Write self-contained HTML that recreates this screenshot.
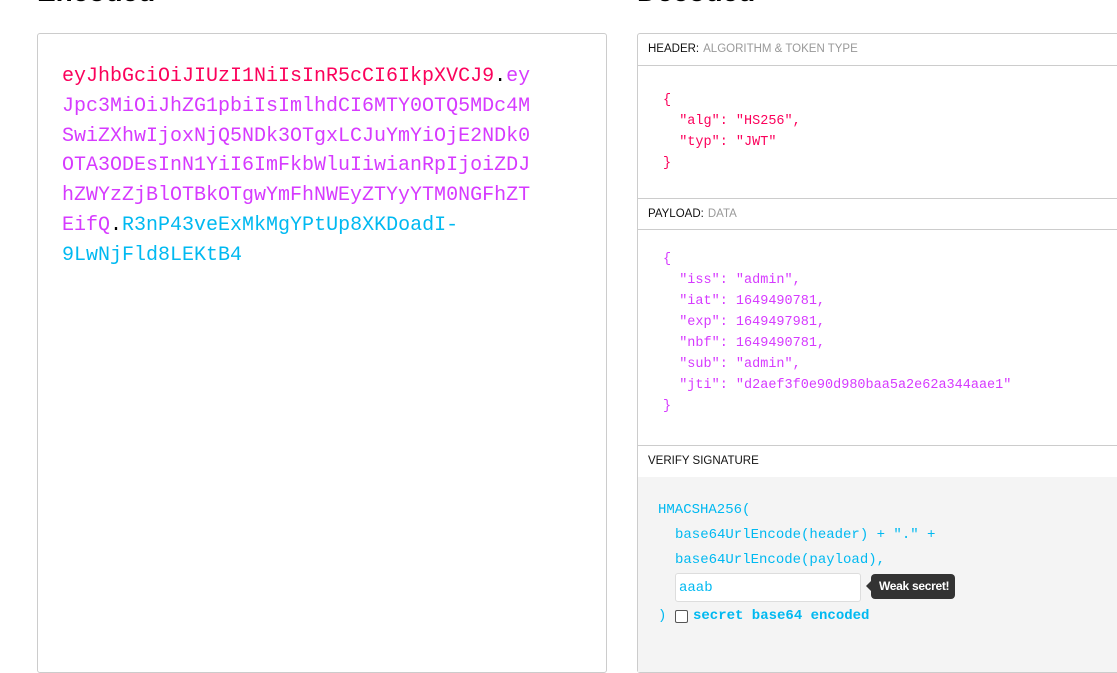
<!DOCTYPE html>
<html><head><meta charset="utf-8"><style>
*{margin:0;padding:0;box-sizing:border-box}
body{width:1117px;height:647px;overflow:hidden;background:#fff;font-family:"Liberation Sans",sans-serif;position:relative}
.mono{font-family:"Liberation Mono",monospace}
.t{position:absolute;font-weight:bold;font-size:28px;color:#000;line-height:28px}
.st{position:absolute;font-size:11px;color:#aaa;line-height:12px}
#enc{position:absolute;left:37px;top:33px;width:570px;height:640px;border:1px solid #ccc;border-radius:3px}
#enc .code{position:absolute;left:24px;top:28px;font-size:20px;line-height:29.8px;white-space:pre}
.r{color:#fb015b}.p{color:#d63aff}.c{color:#00b9f1}.k{color:#000}
#dec{position:absolute;left:637px;top:33px;width:500px;height:640px;border:1px solid #ccc;border-radius:3px}
.lbl{position:absolute;left:0;right:0;height:32px;border-bottom:1px solid #ccc;font-size:11.5px;color:#111;padding:9px 0 0 10px}
.lbl span{color:#999;margin-left:4px}
.js{position:absolute;left:25px;font-size:13.5px;line-height:21px;white-space:pre}
#vb{position:absolute;left:0;right:0;top:443px;bottom:0;background:#f4f4f4}
.v{position:absolute;font-size:14px;color:#00b9f1;white-space:pre;line-height:20px}
</style></head><body>
<div class="t" style="left:37px;top:-22px">Encoded</div>
<div class="st" style="left:157px;top:-9px">PASTE A TOKEN HERE</div>
<div class="t" style="left:637px;top:-22px">Decoded</div>
<div class="st" style="left:760px;top:-9px">EDIT THE PAYLOAD AND SECRET</div>
<div id="enc"><div class="code mono"><span class="r">eyJhbGciOiJIUzI1NiIsInR5cCI6IkpXVCJ9</span><span class="k">.</span><span class="p">ey
Jpc3MiOiJhZG1pbiIsImlhdCI6MTY0OTQ5MDc4M
SwiZXhwIjoxNjQ5NDk3OTgxLCJuYmYiOjE2NDk0
OTA3ODEsInN1YiI6ImFkbWluIiwianRpIjoiZDJ
hZWYzZjBlOTBkOTgwYmFhNWEyZTYyYTM0NGFhZT
EifQ</span><span class="k">.</span><span class="c">R3nP43veExMkMgYPtUp8XKDoadI-
9LwNjFld8LEKtB4</span></div></div>
<div id="dec">
<div class="lbl" style="top:0">HEADER:<span>ALGORITHM &amp; TOKEN TYPE</span></div>
<div class="js mono r" style="top:56px">{
  "alg": "HS256",
  "typ": "JWT"
}</div>
<div class="lbl" style="top:164px;border-top:1px solid #ccc">PAYLOAD:<span>DATA</span></div>
<div class="js mono p" style="top:215px">{
  "iss": "admin",
  "iat": 1649490781,
  "exp": 1649497981,
  "nbf": 1649490781,
  "sub": "admin",
  "jti": "d2aef3f0e90d980baa5a2e62a344aae1"
}</div>
<div class="lbl" style="top:411px;border-top:1px solid #ccc;height:33px">VERIFY SIGNATURE</div>
<div id="vb">
<div class="v mono" style="left:20px;top:23px">HMACSHA256(</div>
<div class="v mono" style="left:37px;top:48px">base64UrlEncode(header) + "." +</div>
<div class="v mono" style="left:37px;top:73px">base64UrlEncode(payload),</div>
<div style="position:absolute;left:37px;top:96px;width:186px;height:29px;background:#fff;border:1px solid #ddd;border-radius:3px"></div>
<div class="v mono" style="left:41px;top:101px">aaab</div>
<div style="position:absolute;left:233px;top:97px;width:84px;height:25px;background:#333;border-radius:4px;color:#fff;font-size:12px;font-weight:bold;line-height:25px;padding-left:8px;letter-spacing:-0.3px">Weak secret!</div>
<div style="position:absolute;left:228px;top:104px;width:0;height:0;border-top:5px solid transparent;border-bottom:5px solid transparent;border-right:5px solid #333"></div>
<div class="v mono" style="left:20px;top:129px">)</div>
<div style="position:absolute;left:37px;top:133px;width:13px;height:13px;border:1px solid #555;border-radius:2px;background:#fff"></div>
<div class="v mono" style="left:55px;top:129px;font-weight:bold">secret base64 encoded</div>
</div>
</div>
</body></html>
